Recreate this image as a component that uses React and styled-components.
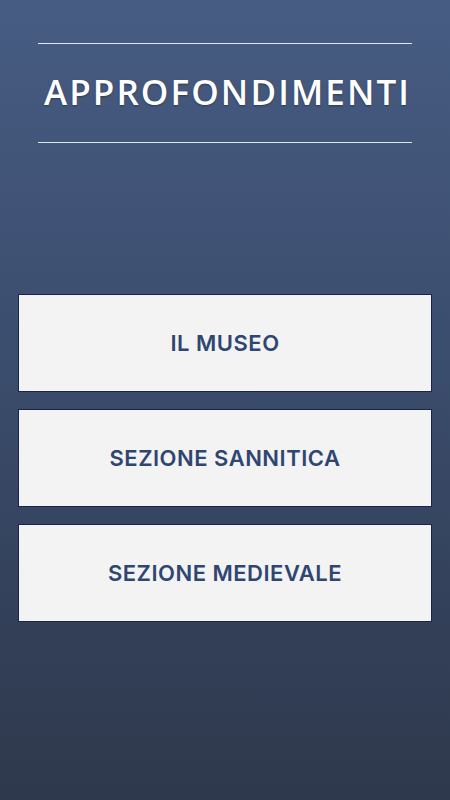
import React from 'react';
import styled, { createGlobalStyle } from 'styled-components';

// -------------- CSS -----------------

const GlobalStyle = createGlobalStyle`
    html, body {
        margin: 0;
        padding: 0;
        height: 100%;
    }
    body {
        font-family: "Open Sans", "Liberation Sans", sans-serif;
    }
`;

const Screen = styled.div`
    width: 450px;
    height: 800px;
    box-sizing: border-box;
    display: flex;
    flex-direction: column;
    background: linear-gradient(180deg, #475c83 0%, #3b4d6d 45%, #323f57 80%, #2f394d 100%);
`;

const Header = styled.header`
    margin: 43px 38px 0 38px;
    display: flex;
    flex-direction: column;
`;

const Rule = styled.div`
    height: 1px;
    background: #dfe6f4;
`;

const Title = styled.h1`
    margin: 0;
    height: 98px;
    padding: 0 0 4px 5px;
    box-sizing: border-box;
    display: flex;
    align-items: center;
    justify-content: center;
    color: #ffffff;
    font-family: "Open Sans", "Liberation Sans", sans-serif;
    font-weight: 600;
    font-size: 35px;
    letter-spacing: 2.1px;
    text-shadow: 0 1px 2px rgba(0, 0, 0, 0.35);
`;

const Menu = styled.nav`
    margin: 151px 18px 0 18px;
    display: flex;
    flex-direction: column;
    gap: 17px;
`;

const MenuButton = styled.a`
    height: 98px;
    box-sizing: border-box;
    display: flex;
    align-items: center;
    justify-content: center;
    background: #f3f3f4;
    border: 1px solid #1b2450;
    color: #2e4670;
    font-family: Inter, "Liberation Sans", sans-serif;
    font-weight: 600;
    font-size: 22px;
    letter-spacing: 0.5px;
    cursor: pointer;
`;

// -------------- COMPONENT -----------------

const sections = ['IL MUSEO', 'SEZIONE SANNITICA', 'SEZIONE MEDIEVALE'];

export default function App() {
    return (
        <>
            <GlobalStyle />
            <Screen>
                <Header>
                    <Rule />
                    <Title>APPROFONDIMENTI</Title>
                    <Rule />
                </Header>
                <Menu>
                    {sections.map(label => (
                        <MenuButton key={label}>{label}</MenuButton>
                    ))}
                </Menu>
            </Screen>
        </>
    );
}
